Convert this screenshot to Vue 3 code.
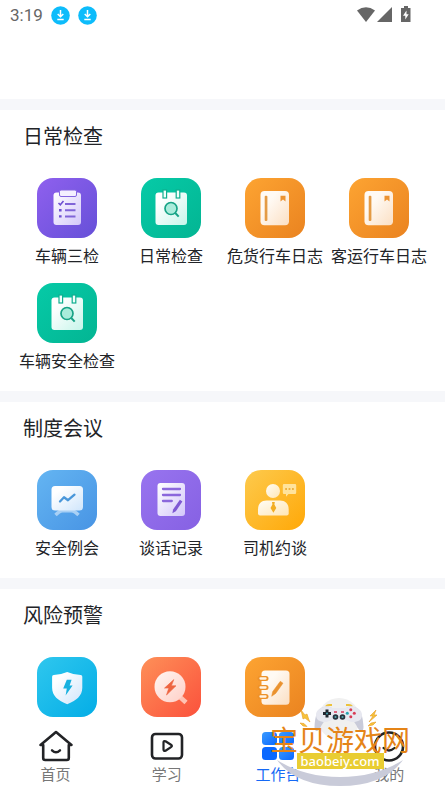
<script setup>
const sections = [
  {
    title: '日常检查',
    items: [
      { label: '车辆三检', icon: 'clipboard', tone: 'violet' },
      { label: '日常检查', icon: 'calendar', tone: 'teal' },
      { label: '危货行车日志', icon: 'book', tone: 'orange' },
      { label: '客运行车日志', icon: 'book', tone: 'orange' },
      { label: '车辆安全检查', icon: 'calendar', tone: 'teal' }
    ]
  },
  {
    title: '制度会议',
    items: [
      { label: '安全例会', icon: 'board', tone: 'blue' },
      { label: '谈话记录', icon: 'note', tone: 'purple' },
      { label: '司机约谈', icon: 'person', tone: 'yellow' }
    ]
  },
  {
    title: '风险预警',
    items: [
      { icon: 'shield', tone: 'cyan' },
      { icon: 'search', tone: 'red' },
      { icon: 'notebook', tone: 'orange' }
    ]
  }
]

const tabs = [
  { label: '首页', icon: 'home' },
  { label: '学习', icon: 'study' },
  { label: '工作台', icon: 'work', active: true },
  { label: '我的', icon: 'mine' }
]
</script>

<template>
  <div class="page">
    <svg class="sprite" width="0" height="0" aria-hidden="true">
      <defs>
        <linearGradient id="g-violet" x1="0" y1="0" x2="1" y2="1"><stop offset="0" stop-color="#fff" /><stop offset="1" stop-color="#d3c7fa" /></linearGradient>
        <linearGradient id="g-teal" x1="0" y1="0" x2="1" y2="1"><stop offset="0.2" stop-color="#fff" /><stop offset="1" stop-color="#c6f5ea" /></linearGradient>
        <linearGradient id="g-orange" x1="0" y1="0" x2="1" y2="1"><stop offset="0.3" stop-color="#fffaf4" /><stop offset="1" stop-color="#fbdfc3" /></linearGradient>
        <linearGradient id="g-blue" x1="0" y1="0" x2="1" y2="1"><stop offset="0.2" stop-color="#fff" /><stop offset="1" stop-color="#cfe5fb" /></linearGradient>
        <linearGradient id="g-yellow" x1="0" y1="0" x2="1" y2="1"><stop offset="0" stop-color="#fffdf6" /><stop offset="1" stop-color="#ffe6b5" /></linearGradient>
        <linearGradient id="g-red" x1="0" y1="0" x2="1" y2="1"><stop offset="0" stop-color="#fff6f2" /><stop offset="1" stop-color="#ffcfc6" /></linearGradient>
        <linearGradient id="g-tab" x1="0" y1="0" x2="1" y2="1"><stop offset="0" stop-color="#3a9bff" /><stop offset="1" stop-color="#0a68ff" /></linearGradient>
      </defs>

      <symbol id="i-clipboard" viewBox="0 0 60 60">
        <rect x="16.5" y="14.5" width="27.5" height="32.5" rx="3" fill="url(#g-violet)" />
        <rect x="22.5" y="12" width="17" height="6.5" rx="1.5" fill="#f4f0ff" stroke="#8465e0" stroke-width="1" />
        <path d="M21.5 25l1.8 1.8 3.2-3.8" fill="none" stroke="#6e50d2" stroke-width="1.6" />
        <path d="M28 26h10.5M28 32.2h10.5M28 38.4h10.5" stroke="#8064d8" stroke-width="2" />
        <path d="M22 32.2h2.6M22 38.4h2.6" stroke="#6e50d2" stroke-width="2.4" />
      </symbol>

      <symbol id="i-calendar" viewBox="0 0 60 60">
        <rect x="14.5" y="14.5" width="31.5" height="32.5" rx="3" fill="url(#g-teal)" />
        <rect x="22" y="12" width="3.6" height="8" fill="#effffb" stroke="#0fae8f" stroke-width="1.2" />
        <rect x="35.2" y="12" width="3.6" height="8" fill="#effffb" stroke="#0fae8f" stroke-width="1.2" />
        <circle cx="30" cy="30.5" r="6" fill="#a9ecdb" stroke="#17a386" stroke-width="1.7" />
        <path d="M34.3 35l3.4 3.6" stroke="#17a386" stroke-width="2" />
      </symbol>

      <symbol id="i-book" viewBox="0 0 60 60">
        <rect x="15.5" y="13" width="28.5" height="34.2" rx="4" fill="url(#g-orange)" />
        <rect x="19.7" y="17.7" width="2.7" height="25.3" rx="1" fill="#e49b45" />
        <path d="M35.5 17.7h5v5.8l-2.5-2-2.5 2z" fill="#ec9332" />
      </symbol>

      <symbol id="i-board" viewBox="0 0 60 60">
        <path d="M18.5 45q4-4 7-4.200h9q3 .2 7 4.200" fill="none" stroke="#a8d0f5" stroke-width="3.400" />
        <rect x="14.500" y="16" width="31.5" height="24.500" rx="3.500" fill="url(#g-blue)" />
        <path d="M23 31.500l4-4.200 4 2.900 6.500-5.500" fill="none" stroke="#4a97da" stroke-width="2.300" stroke-linecap="round" stroke-linejoin="round" />
      </symbol>

      <symbol id="i-note" viewBox="0 0 60 60">
        <rect x="16.5" y="13" width="27.500" height="33" rx="3" fill="url(#g-violet)" />
        <path d="M22 19h17M22 25h17M22 31h8.800" stroke="#8b67dc" stroke-width="2.300" stroke-linecap="round" />
        <path d="M38.900 29.800l2.500 1.800-6.600 9.700-3.400 2 .7-3.900z" fill="#7e58d3" />
      </symbol>

      <symbol id="i-person" viewBox="0 0 60 60">
        <circle cx="28" cy="21" r="7" fill="url(#g-yellow)" />
        <path d="M13 43.500v-4c0-6 3.500-9 8.500-9h13.500c5 0 8.700 3 8.700 9v4q0 2-2 2h-26.700q-2 0-2-2z" fill="url(#g-yellow)" />
        <path d="M27 32h2.800l-.4 2.500 1.900 3.500-2.900 4.800-2.900-4.800 1.900-3.500z" fill="#f2ad22" />
        <path d="M39 14h11q1.200 0 1.200 1.200v7.600q0 1.200-1.200 1.200h-6.500l-2.500 2.700v-2.700h-2q-1.200 0-1.200-1.200v-7.600q0-1.200 1.200-1.200z" fill="#ffe39c" />
        <path d="M40.200 19h1.800M43.600 19h1.800M47 19h1.800" stroke="#eeb140" stroke-width="1.800" />
      </symbol>

      <symbol id="i-shield" viewBox="0 0 60 60">
        <path d="M30.200 15q7 3 13.500 3 1.600 0 1.600 1.800v11c0 8-6 13-15.100 16.500-9.100-3.500-15.100-8.500-15.100-16.500v-11q0-1.800 1.600-1.800 6.500 0 13.500-3z" fill="url(#g-blue)" />
        <path d="M29.800 22.800h4.800l-2 5.700h3l-7 10 1.200-7h-3.600z" fill="#17b1df" />
      </symbol>

      <symbol id="i-search" viewBox="0 0 60 60">
        <path d="M39.500 40.500l5.500 5" stroke="#ffc2b2" stroke-width="4.600" />
        <circle cx="29" cy="29.800" r="15.500" fill="url(#g-red)" />
        <path d="M32.800 22.600l-9.300 8.500h4.300l-2.300 6.900 9.500-9.200h-4.600z" fill="#ee6541" stroke="#ee6541" stroke-width=".6" />
      </symbol>

      <symbol id="i-notebook" viewBox="0 0 60 60">
        <rect x="16.500" y="13.500" width="28" height="34.200" rx="3.500" fill="url(#g-orange)" />
        <path d="M15 21.500h6M15 30.500h6M15 39.500h6" stroke="#ec922b" stroke-width="5" stroke-linecap="round" />
        <path d="M15.500 21.500h5M15.500 30.500h5M15.500 39.500h5" stroke="#fff3e4" stroke-width="2.300" stroke-linecap="round" />
        <path d="M35.300 24.300l2.700 1.900-7.300 10.200-4 2.900.9-4.600z" fill="#ea922f" stroke="#ea922f" stroke-width=".5" />
      </symbol>

      <symbol id="i-home" viewBox="0 0 36 32">
        <path d="M2.500 15l15.500-13 15.500 13H30.800v13q0 2-2 2H7.200q-2 0-2-2V15z" fill="none" stroke="#222326" stroke-width="2.600" stroke-linejoin="round" />
        <path d="M14 20.300q4 4 8 0" fill="none" stroke="#222326" stroke-width="2.400" stroke-linecap="round" />
      </symbol>

      <symbol id="i-study" viewBox="0 0 36 32">
        <rect x="3" y="4" width="30" height="24.500" rx="3.500" fill="none" stroke="#222326" stroke-width="2.600" />
        <path d="M14.500 12.500q0-2 2-1.200l5.500 3.500q1.800 1.200 0 2.400l-5.500 3.500q-2 .8-2-1.200z" fill="none" stroke="#222326" stroke-width="2.200" stroke-linejoin="round" />
      </symbol>

      <symbol id="i-work" viewBox="0 0 36 32">
        <rect x="2" y="2" width="15" height="13" rx="3.500" fill="url(#g-tab)" />
        <rect x="19" y="2" width="15" height="13" rx="3.500" fill="url(#g-tab)" />
        <rect x="2" y="17" width="15" height="13" rx="3.500" fill="#0a68ff" />
        <rect x="19" y="17" width="15" height="13" rx="3.500" fill="url(#g-tab)" />
      </symbol>

      <symbol id="i-mine" viewBox="0 0 36 32">
        <circle cx="18" cy="16.500" r="14" fill="none" stroke="#222326" stroke-width="2.600" />
        <path d="M12.500 18q5.500 5 11 0" fill="none" stroke="#222326" stroke-width="2.200" stroke-linecap="round" />
      </symbol>
    </svg>

    <header class="status">
      <span class="clock">3:19</span>
      <svg v-for="n in 2" :key="n" class="dl" viewBox="0 0 19 19" aria-hidden="true">
        <circle cx="9.500" cy="9.500" r="9.300" fill="#0dbcfb" />
        <path d="M9.500 4v6.500M6.700 8l2.800 2.800 2.800-2.800M6.300 13.600h6.400" fill="none" stroke="#fff" stroke-width="1.500" />
      </svg>
      <svg class="signals" viewBox="0 0 54 18" aria-hidden="true">
        <path d="M0 4.500q9-6.500 18 0L9 16z" fill="#666" />
        <path d="M35 1v15H20z" fill="#666" />
        <path d="M44 2h3V0h4v2h2.500v14H44z" fill="#666" />
        <path d="M49.500 4.500l-3.500 5.200h2.300v3.800l3.400-5.200h-2.200z" fill="#fff" />
      </svg>
    </header>

    <main class="content">
      <section v-for="section in sections" :key="section.title" class="section">
        <h2>{{ section.title }}</h2>
        <div class="grid">
          <a v-for="item in section.items" :key="item.label || item.icon" class="item" href="#">
            <svg class="tile" :class="item.tone" aria-hidden="true"><use :href="'#i-' + item.icon" /></svg>
            <span v-if="item.label" class="label">{{ item.label }}</span>
          </a>
        </div>
      </section>
    </main>

    <nav class="tabs">
      <a v-for="tab in tabs" :key="tab.icon" class="tab" :class="{ active: tab.active }" href="#">
        <svg class="tab-icon" aria-hidden="true"><use :href="'#i-' + tab.icon" /></svg>
        <span>{{ tab.label }}</span>
      </a>
    </nav>

    <div class="badge">
      <svg class="badge-art" viewBox="0 0 140 90" aria-hidden="true">
        <path d="M7 62Q34 79 70 79T133 62Q114 88 70 88T7 62z" fill="#c9cbd9" />
        <circle cx="69" cy="21" r="21" fill="#f0f0f0" />
        <path d="M56 8.500q1-1.500 3-1.500h3M76 7h3q2 0 3 1.500" fill="none" stroke="#edc23a" stroke-width="2" />
        <path d="M54 9q3-1.500 6 0l2 1h14l2-1q3-1.500 6 0c7 1 9 10 9.500 20 0 5-3 5-5 2-3-5-5-10-9-10H58.500c-4 0-6 5-9 10-2 3-5 3-5-2C45 19 47 10 54 9z" fill="#c9cbd9" />
        <path d="M54 9q3-1.500 6 0l2 1h14l2-1q3-1.500 6 0c5 1 8 4 8 8 0 5-4 7-9 7-4 0-5-2-8-2h-12c-3 0-4 2-8 2-5 0-9-2-9-7 0-4 3-7 8-8z" fill="#e7e8f0" />
        <path d="M57 11.500v8M53 15.500h8" stroke="#20262f" stroke-width="3" />
        <circle cx="57" cy="15.500" r="1" fill="#44a6b4" />
        <circle cx="65.500" cy="19" r="2.800" fill="#26313c" /><circle cx="72.500" cy="19" r="2.800" fill="#26313c" />
        <circle cx="65.500" cy="19" r="1.100" fill="#52a4ad" /><circle cx="72.500" cy="19" r="1.100" fill="#52a4ad" />
        <path d="M64 14h3M71 14h3" stroke="#d73958" stroke-width="1.300" />
        <circle cx="80.800" cy="11.800" r="1.500" fill="#d83c55" /><circle cx="80.800" cy="18.800" r="1.500" fill="#d83c55" />
        <circle cx="77.300" cy="15.300" r="1.500" fill="#25a3b1" /><circle cx="84.300" cy="15.300" r="1.500" fill="#d83c55" />
        <path d="M31 12l4 5 2-1 2 6 1 2-5-4-2 1zM30 25l4 .5 3 3-4-.5zM106 12l-6 6h3l-4 6 8-7h-3zM106 24l-5 1-3 3 5-1z" fill="#f6c33a" stroke="#e89b25" stroke-width=".6" />
      </svg>
      <span class="badge-name">宝贝游戏网</span>
      <span class="badge-site">baobeiy.com</span>
    </div>
  </div>
</template>

<style>
body {
  margin: 0;
  background: #fff;
}
</style>

<style scoped>
.page {
  position: relative;
  display: flex;
  flex-direction: column;
  height: 100vh;
  background: #fff;
  color: #222428;
  font-family: "Noto Sans CJK SC", sans-serif;
}
.sprite {
  position: absolute;
}
a {
  color: inherit;
  text-decoration: none;
}
.status {
  display: flex;
  align-items: center;
  gap: 8px;
  height: 30px;
  padding: 0 34px 0 10px;
}
.clock {
  color: #666;
  font: 17px/30px Roboto, sans-serif;
}
.dl {
  width: 19px;
  height: 19px;
}
.signals {
  width: 54px;
  height: 18px;
  margin-left: auto;
}
.content {
  flex: 1;
  min-height: 0;
  padding-top: 69px;
  overflow-y: auto;
}
.section {
  padding: 12px 14px 20px 15px;
  border-top: 11px solid #f6f7fa;
}
.section:last-child {
  padding-bottom: 0;
}
h2 {
  margin: 0 8px 28px;
  font-size: 20px;
  font-weight: 400;
  line-height: 28px;
}
.grid {
  display: grid;
  grid-template-columns: repeat(4, 1fr);
  row-gap: 17px;
}
.item {
  display: flex;
  flex-direction: column;
  align-items: center;
  gap: 6px;
  min-width: 0;
}
.tile {
  width: 60px;
  height: 60px;
  border-radius: 16px;
}
.violet { background: linear-gradient(135deg, #8f60ee, #6650d8); }
.teal { background: linear-gradient(135deg, #06caa7, #03b593); }
.orange { background: linear-gradient(135deg, #fda432, #ea8320); }
.blue { background: linear-gradient(135deg, #64b5f2, #4894e4); }
.purple { background: linear-gradient(135deg, #9874ef, #8661e3); }
.yellow { background: linear-gradient(135deg, #fdca4d, #ffa808); }
.cyan { background: linear-gradient(135deg, #2fc7ee, #04ade6); }
.red { background: linear-gradient(135deg, #fe9058, #fb513c); }
.label {
  font-size: 16px;
  line-height: 22px;
  white-space: nowrap;
}
.tabs {
  display: grid;
  grid-template-columns: repeat(4, 1fr);
  padding: 9px 0 6px;
  background: #fff;
}
.tab {
  display: flex;
  flex-direction: column;
  align-items: center;
  gap: 1px;
  color: #777;
  font-size: 15px;
  line-height: 22px;
}
.tab-icon {
  width: 36px;
  height: 32px;
}
.active {
  color: #1569f5;
}
.badge {
  position: absolute;
  right: 35px;
  bottom: 3px;
  display: flex;
  flex-direction: column;
  align-items: center;
  width: 140px;
  height: 63px;
  padding-top: 27px;
  pointer-events: none;
}
.badge-art {
  position: absolute;
  top: 0;
  left: 0;
  width: 140px;
  height: 90px;
}
.badge-name {
  position: relative;
  color: #e58417;
  font-size: 28px;
  font-weight: 400;
  line-height: 28px;
  white-space: nowrap;
}
.badge-site {
  position: relative;
  padding: 0 4px;
  background: #e9cd32;
  color: #fff;
  font: 500 13px/16px "Noto Sans", sans-serif;
}
</style>
